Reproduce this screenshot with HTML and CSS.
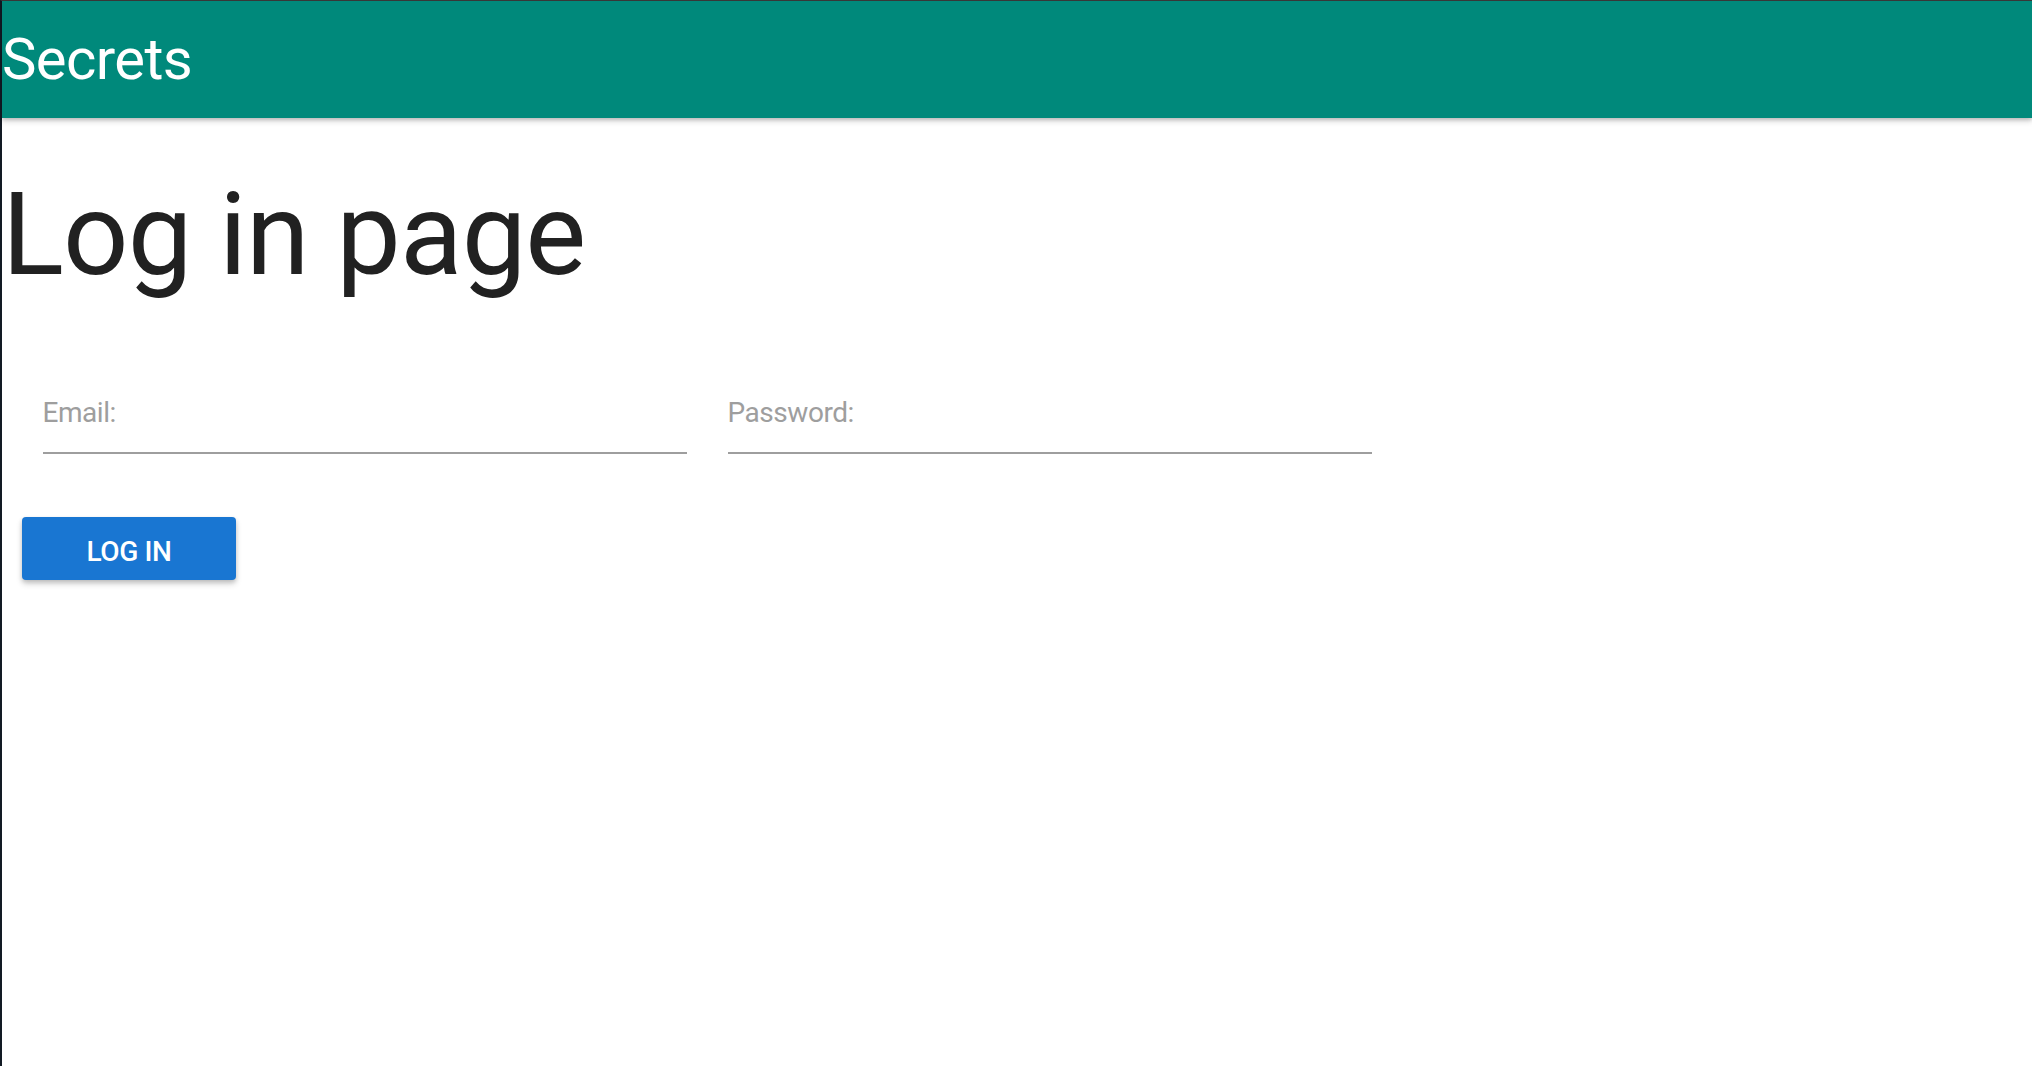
FILE: index.html
```html
<!DOCTYPE html>
<html>
<head>
<meta charset="utf-8">
<title>Secrets</title>
<link rel="stylesheet" href="styles.css">
</head>
<body>
<div class="frame">
  <nav class="navbar">
    <span class="brand">Secrets</span>
  </nav>
  <main class="content">
    <h1 class="title">Log in page</h1>
    <form class="login-form">
      <div class="row">
        <div class="col">
          <div class="field"><span class="label">Email:</span></div>
        </div>
        <div class="col">
          <div class="field"><span class="label">Password:</span></div>
        </div>
      </div>
      <button type="button" class="btn">LOG IN</button>
    </form>
  </main>
</div>
</body>
</html>
```

FILE: styles.css
```css
html, body {
  margin: 0;
  padding: 0;
  background: #ffffff;
  height: 100%;
}
body {
  font-family: Roboto, "Liberation Sans", sans-serif;
  color: #212121;
}
.frame {
  min-height: 1065px;
  border-top: 1px solid #3a3a3a;
  border-left: 2px solid #121a24;
  background: #ffffff;
}
.navbar {
  height: 117px;
  background: #00897b;
  box-shadow: 0 3px 6px rgba(0,0,0,0.18), 0 2px 3px rgba(0,0,0,0.12);
  display: flex;
  align-items: flex-start;
}
.brand {
  color: #ffffff;
  font-size: 58px;
  line-height: 117px;
  letter-spacing: -0.6px;
}
.title {
  margin: 54px 0 0 0;
  font-size: 115px;
  line-height: 126px;
  font-weight: 400;
  letter-spacing: -0.9px;
  color: #212121;
}
.row {
  display: flex;
  width: 1370px;
  margin: 99px 0 0 20px;
}
.col {
  flex: 1;
  padding: 0 20.5px;
}
.field {
  border-bottom: 2px solid #9e9e9e;
  padding-bottom: 23px;
}
.label {
  display: block;
  font-size: 28px;
  line-height: 32px;
  letter-spacing: -0.45px;
  color: #9e9e9e;
}
.btn {
  display: flex;
  align-items: center;
  justify-content: center;
  margin: 63px 0 0 20px;
  width: 214px;
  height: 63px;
  border: none;
  border-radius: 4px;
  background: #1976d2;
  color: #ffffff;
  font-family: Roboto, "Liberation Sans", sans-serif;
  font-size: 28px;
  font-weight: 500;
  letter-spacing: -0.4px;
  padding: 5px 0 0 0;
  box-shadow: 0 4px 6px rgba(0,0,0,0.16), 0 2px 4px rgba(0,0,0,0.14);
}
```
